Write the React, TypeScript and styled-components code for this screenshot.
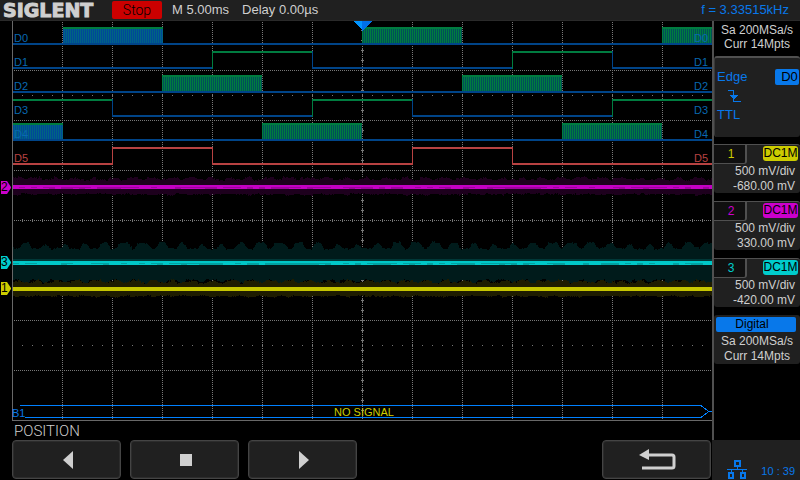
import React from 'react';
import styled, { createGlobalStyle } from 'styled-components';

const blue = '#0878ea';
const panel = '#202020';
const edge = '#505050';
const ink = '#cfcfcf';

const GlobalStyle = createGlobalStyle`
  * { box-sizing: border-box; }
  body {
    margin: 0;
    background: #000;
    color: ${ink};
    font-family: "Liberation Sans", Arial, sans-serif;
    font-size: 12px;
    line-height: 15px;
  }
  button { font: inherit; color: inherit; padding: 0; border: 0; }
`;

const Screen = styled.div`
  min-height: 100vh;
  display: flex;
  flex-direction: column;
`;

const Header = styled.header`
  flex: none;
  height: 21px;
  display: flex;
  align-items: center;
  padding: 0 11px 1px 3px;
  background: ${panel};
  border-bottom: 1px solid #2a2a2a;
  font-size: 13px;
  line-height: 18px;
  white-space: nowrap;
`;

const Logo = styled.h1`
  margin: 0;
  width: 109px;
  font: bold 19px/20px "DejaVu Sans", sans-serif;
  -webkit-text-stroke: 1px ${ink};
`;

const RunState = styled.button`
  width: 50px;
  height: 18px;
  margin-right: 10px;
  border-radius: 2px;
  background: #cc0000;
  color: #000;
  font-family: Roboto, "Liberation Sans", sans-serif;
  font-size: 14px;
  font-weight: 300;
`;

const Reading = styled.span`
  margin-right: 13px;
`;

const Frequency = styled.span`
  margin-left: auto;
  color: ${blue};
`;

const Body = styled.div`
  flex: 1;
  display: grid;
  grid-template-columns: minmax(0, 1fr) 88px;
`;

const Main = styled.main`
  display: flex;
  flex-direction: column;
`;

const Plot = styled.section`
  position: relative;
  flex: 1;
  min-height: 200px;
`;

const Traces = styled.svg`
  position: absolute;
  inset: 0;
  width: 100%;
  height: 100%;
`;

const TraceLabel = styled.span<{ $y: number; $x: number; $color: string }>`
  position: absolute;
  left: ${(p) => (p.$x / 712) * 100}%;
  top: ${(p) => ((p.$y - 21) / 400) * 100}%;
  color: ${(p) => p.$color};
  font-size: 11px;
  line-height: 12px;
  white-space: nowrap;
`;

const BusMessage = styled(TraceLabel)`
  transform: translateX(-50%);
`;

const ChannelTag = styled.span<{ $y: number; $color: string }>`
  position: absolute;
  left: 1px;
  top: ${(p) => ((p.$y - 21) / 400) * 100}%;
  width: 10px;
  height: 13px;
  background: ${(p) => p.$color};
  color: #000;
  font-size: 12px;
  line-height: 13px;
  clip-path: polygon(0 0, 6px 0, 8px 3px, 10px 6px, 10px 7px, 8px 10px, 6px 100%, 0 100%);
`;

const MenuTitle = styled.h2`
  margin: 0;
  padding-left: 14px;
  height: 19px;
  font-family: Roboto, "Liberation Sans", sans-serif;
  font-size: 15px;
  font-weight: 300;
  line-height: 20px;
`;

const SoftKeys = styled.nav`
  display: grid;
  grid-template-columns: repeat(6, minmax(0, 1fr));
  gap: 9px;
  height: 40px;
  padding: 0 1px 1px 12px;
`;

const SoftKey = styled.button<{ $column: number }>`
  grid-column: ${(p) => p.$column};
  display: grid;
  place-items: center;
  padding-left: 2px;
  border: 1px solid #444;
  box-shadow: inset 0 0 0 1px #2c2c2c;
  border-radius: 4px;
  background: ${panel};
`;

const Sidebar = styled.aside`
  display: flex;
  flex-direction: column;
  border-left: 2px solid ${edge};
`;

const Sampling = styled.section`
  height: 35px;
  padding-top: 2px;
  text-align: center;
  line-height: 14px;
`;

const Trigger = styled.section`
  height: 81px;
  margin-bottom: 7px;
  padding: 11px 0 0 2px;
  border-top: 2px solid ${edge};
  border-left: 1px solid #3a3a3a;
  border-radius: 3px;
  background: ${panel};
  color: ${blue};
  font-size: 13px;
`;

const TriggerRow = styled.div`
  display: flex;
  align-items: center;
  justify-content: space-between;
  height: 16px;
  padding-right: 1px;
  line-height: 14px;
`;

const TriggerSource = styled.button`
  width: 24px;
  height: 16px;
  padding-left: 5px;
  border-radius: 2px;
  background: ${blue};
  color: #000;
`;

const SlopeIcon = styled.svg`
  display: block;
  width: 14px;
  height: 14px;
  margin: 4px 0 4px 10px;
`;

const ChannelPanel = styled.section`
  height: 49px;
  margin-bottom: 8px;
  background: ${panel};
  border-top: 1px solid ${edge};
  border-radius: 0 3px 3px 3px;
  text-align: right;
`;

const ChannelHead = styled.div`
  display: flex;
  justify-content: space-between;
  height: 19px;
`;

const ChannelNumber = styled.span<{ $color: string }>`
  width: 33px;
  padding-left: 3px;
  border-right: 2px solid ${edge};
  border-bottom: 1px solid ${edge};
  border-bottom-right-radius: 3px;
  background: #101010;
  color: ${(p) => p.$color};
  text-align: center;
  line-height: 18px;
`;

const Coupling = styled.button<{ $color: string }>`
  width: 35px;
  height: 15px;
  margin: 1px 2px 0 0;
  border-radius: 3px;
  background: ${(p) => p.$color};
  color: #000;
`;

const Value = styled.div`
  padding-right: 5px;
  white-space: nowrap;
`;

const DigitalPanel = styled.section`
  height: 49px;
  padding: 2px 2px 0 2px;
  border-radius: 3px;
  background: ${panel};
  text-align: center;
`;

const DigitalButton = styled.button`
  display: block;
  width: calc(100% - 2px);
  height: 15px;
  margin-bottom: 2px;
  padding-right: 8px;
  border-radius: 2px;
  background: ${blue};
  color: #000;
`;

const Status = styled.footer`
  display: flex;
  align-items: flex-end;
  justify-content: space-between;
  height: 40px;
  margin: auto 0 0 -2px;
  padding: 0 5px 1px 15px;
  background: ${panel};
  color: ${blue};
  font-size: 11px;
`;

type Burst = [number, number, boolean?];
type Digital = { name: string; high: number; bursts?: Burst[]; pulses?: [number, number][] };

const digitals: Digital[] = [
  { name: 'D0', high: 27, bursts: [[63, 163, true], [362, 462], [662, 712]] },
  { name: 'D1', high: 51, pulses: [[212, 312], [512, 612]] },
  { name: 'D2', high: 75, bursts: [[162, 262], [462, 562]] },
  { name: 'D3', high: 99, pulses: [[12, 112], [312, 412], [612, 712]] },
  { name: 'D4', high: 123, bursts: [[13, 63, true], [262, 362], [562, 662]] },
  { name: 'D5', high: 147, pulses: [[112, 212], [412, 512]] },
];

const range = (n: number) => Array.from({ length: n }, (_, i) => i);

const noise = (seed: number, i: number) => {
  const v = Math.sin(i * 127.1 + seed * 311.7) * 43758.5453;
  return v - Math.floor(v);
};

function band(seed: number, top: number, bottom: number, swellTop: number, swellBottom: number) {
  const upper: string[] = [];
  const lower: string[] = [];
  for (let x = 13; x < 712; x += 1) {
    const wave = Math.max(-0.5, Math.min(0.7, Math.sin((x + seed * 9) / 3.1) + 0.6 * Math.sin(x / 23 + seed)));
    const j = Math.round(noise(seed, x) * 1.2 + noise(seed, Math.floor(x / 3)) * 1.6);
    const k = Math.round(noise(seed + 5, x) + noise(seed + 4, Math.floor(x / 5)));
    upper.push(`L${x} ${top - Math.round(wave * swellTop) - j}h1`);
    lower.unshift(`L${x + 1} ${bottom + Math.round(wave * swellBottom) + k}h-1`);
  }
  return `M13 ${top}${upper.join('')}${lower.join('')}Z`;
}

function Grid() {
  return (
    <g stroke="#777" fill="none">
      {range(13).map((i) => (
        <path key={`v${i}`} d={`M${62.5 + i * 50} 22V420`} strokeDasharray="1 1" />
      ))}
      {range(7).map((i) => (
        <path key={`h${i}`} d={`M14 ${70.5 + i * 50}H712`} strokeDasharray="1 1" />
      ))}
      <path d="M22 95.5H712M22 345.5H712" strokeDasharray="1 9" />
      {range(69).map((i) => (
        <path key={`t${i}`} d={`M${22.5 + i * 10} 219v3`} />
      ))}
      {range(39).map((i) => (
        <path key={`c${i}`} d={`M361 ${30.5 + i * 10}h1m1 0h1M362.5 ${29 + i * 10}v1m0 1v1`} />
      ))}
    </g>
  );
}

function DigitalTrace({ d }: { d: Digital }) {
  const red = d.name === 'D5';
  const high = red ? '#b84242' : '#007c40';
  const low = red ? '#b84242' : '#004488';
  const pulses = d.pulses ?? [];
  const lows: [number, number][] = [];
  let x = 13;
  pulses.forEach(([a, b]) => {
    if (a > x) lows.push([x, a]);
    x = b;
  });
  if (x < 712) lows.push([x, 712]);
  return (
    <g>
      {lows.map(([a, b]) => (
        <rect key={a} x={a} y={d.high + 16} width={b - a} height={2} fill={low} />
      ))}
      {pulses.map(([a, b]) => (
        <g key={a}>
          <rect x={Math.max(a, 13)} y={d.high} width={b - Math.max(a, 13)} height={2} fill={high} />
          {a > 13 && <rect x={a} y={d.high} width={1} height={18} fill={high} />}
          {b < 712 && <rect x={b} y={d.high} width={1} height={18} fill={low} />}
        </g>
      ))}
      {(d.bursts ?? []).map(([a, b, cool]) => (
        <g key={a}>
          <rect x={a} y={d.high} width={b - a} height={16} fill={cool ? '#004898' : '#007c40'} />
          <path
            d={`M${a + 1} ${d.high + 9}H${b}`}
            stroke={cool ? '#006482' : '#005058'}
            strokeWidth={14}
            strokeDasharray="1 1"
          />
          <rect x={a} y={d.high} width={b - a} height={2} fill={high} />
        </g>
      ))}
    </g>
  );
}

function Core({ y, color, dark, seed }: { y: number; color: string; dark: string; seed: number }) {
  return (
    <g>
      <rect x={13} y={y} width={699} height={4} fill={color} />
      {range(116).map((i) =>
        noise(seed, i) > 0.35 ? (
          <rect key={i} x={13 + i * 6} y={y + 2} width={6} height={noise(seed, i) > 0.7 ? 2 : 1} fill={dark} />
        ) : null,
      )}
    </g>
  );
}

function Scope() {
  return (
    <Plot aria-label="Waveforms">
      <Traces viewBox="0 21 712 400" preserveAspectRatio="none" shapeRendering="crispEdges" aria-hidden="true">
        <Grid />
        <path d="M12.5 21V420.5H712" stroke="#686868" fill="none" />
        {digitals.map((d) => (
          <DigitalTrace key={d.name} d={d} />
        ))}
        <path d={band(1, 180, 193, 2, 1)} fill="#1d001d" />
        <path d={band(2, 248, 280, 5, 3)} fill="#001b1b" />
        <path d={band(3, 283, 295, 2, 1)} fill="#1e1c00" />
        <rect x={13} y={259} width={699} height={2} fill="#003838" />
        <Core y={185} color="#c400c4" dark="#a000a0" seed={4} />
        <Core y={261} color="#00c8c8" dark="#00a2a2" seed={5} />
        <rect x={13} y={287} width={699} height={4} fill="#c6c600" />
        <path d="M20 405.5H701L709 411.5H712M25 417.5H701L709 411.5" stroke="#0080ff" fill="none" />
        <path d="M353 21h10v10z" fill="#0094ff" />
        <path d="M362 21h10l-10 10z" fill="#0070e8" />
      </Traces>
      {digitals.map((d) => {
        const color = d.name === 'D5' ? '#b84242' : '#0868b0';
        return (
          <React.Fragment key={d.name}>
            <TraceLabel $x={14} $y={d.high + 5} $color={color}>{d.name}</TraceLabel>
            <TraceLabel $x={694} $y={d.high + 5} $color={color}>{d.name}</TraceLabel>
          </React.Fragment>
        );
      })}
      <TraceLabel $x={12} $y={407} $color={blue}>B1</TraceLabel>
      <BusMessage $x={364} $y={406} $color="#cccc00">NO SIGNAL</BusMessage>
      <ChannelTag $y={181} $color="#cc00cc">2</ChannelTag>
      <ChannelTag $y={256} $color="#00cccc">3</ChannelTag>
      <ChannelTag $y={282} $color="#cccc00">1</ChannelTag>
    </Plot>
  );
}

const channels = [
  { id: 1, color: '#cccc00', scale: '500 mV/div', offset: '-680.00 mV' },
  { id: 2, color: '#cc00cc', scale: '500 mV/div', offset: '330.00 mV' },
  { id: 3, color: '#00cccc', scale: '500 mV/div', offset: '-420.00 mV' },
];

export default function App() {
  return (
    <Screen>
      <GlobalStyle />
      <Header>
        <Logo>SIGLENT</Logo>
        <RunState>Stop</RunState>
        <Reading>M 5.00ms</Reading>
        <Reading>Delay 0.00µs</Reading>
        <Frequency>f = 3.33515kHz</Frequency>
      </Header>
      <Body>
        <Main>
          <Scope />
          <MenuTitle>POSITION</MenuTitle>
          <SoftKeys>
            <SoftKey $column={1} aria-label="Move left">
              <svg width="10" height="18" fill={ink}><path d="M10 0v18L0 9z" /></svg>
            </SoftKey>
            <SoftKey $column={2} aria-label="Center">
              <svg width="12" height="12" fill={ink}><path d="M0 0h12v12H0z" /></svg>
            </SoftKey>
            <SoftKey $column={3} aria-label="Move right">
              <svg width="10" height="18" fill={ink}><path d="M0 0v18l10-9z" /></svg>
            </SoftKey>
            <SoftKey $column={6} aria-label="Back">
              <svg width="38" height="21" viewBox="0 0 38 21">
                <path d="M9 6h24q2 0 2 2v9q0 2-2 2H3" fill="none" stroke={ink} strokeWidth="3" />
                <path d="M0 6L10 0v11z" fill={ink} />
              </svg>
            </SoftKey>
          </SoftKeys>
        </Main>
        <Sidebar>
          <Sampling>
            <div>Sa 200MSa/s</div>
            <div>Curr 14Mpts</div>
          </Sampling>
          <Trigger>
            <TriggerRow>
              <span>Edge</span>
              <TriggerSource>D0</TriggerSource>
            </TriggerRow>
            <SlopeIcon viewBox="0 0 14 14" fill="none" stroke={blue} shapeRendering="crispEdges" aria-hidden="true">
              <path d="M1 1.5h5M6.5 1v11M6 12.5h8" strokeWidth="1" />
              <path d="M3 6h8l-4 5z" fill={blue} stroke="none" />
            </SlopeIcon>
            <span>TTL</span>
          </Trigger>
          {channels.map((c) => (
            <ChannelPanel key={c.id}>
              <ChannelHead>
                <ChannelNumber $color={c.color}>{c.id}</ChannelNumber>
                <Coupling $color={c.color}>DC1M</Coupling>
              </ChannelHead>
              <Value>{c.scale}</Value>
              <Value>{c.offset}</Value>
            </ChannelPanel>
          ))}
          <DigitalPanel>
            <DigitalButton>Digital</DigitalButton>
            <div>Sa 200MSa/s</div>
            <div>Curr 14Mpts</div>
          </DigitalPanel>
          <Status>
            <svg width="20" height="19" viewBox="0 0 20 19" fill="none" stroke={blue} shapeRendering="crispEdges" aria-label="Network connected" role="img">
              <path d="M8 1h5v5H8zM2 13h4v5H2zM14 13h4v5h-4z" strokeWidth="2" />
              <path d="M0 9.5h20M10.5 6v3M4.5 10v2M15.5 10v2" />
            </svg>
            <time>10 : 39</time>
          </Status>
        </Sidebar>
      </Body>
    </Screen>
  );
}
